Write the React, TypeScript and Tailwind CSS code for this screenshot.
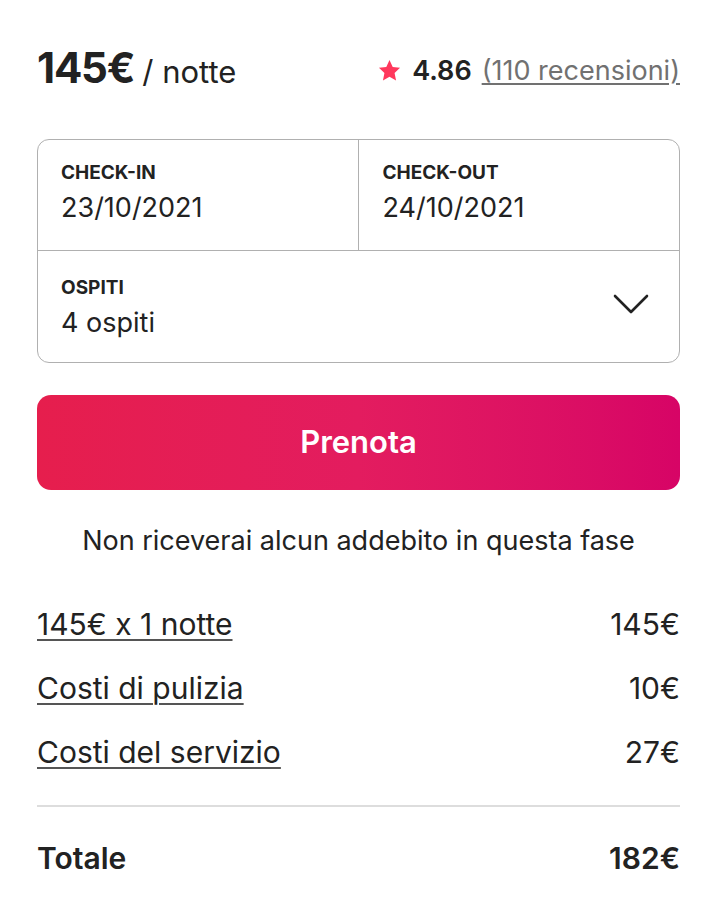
const font = { fontFamily: 'Inter, "Noto Sans", sans-serif' };

function Star() {
  return (
    <svg viewBox="0 0 32 32" className="h-[25px] w-[25px]" fill="#ff385c">
      <path d="M16 2.5l4.1 8.9 9.4 1.1-7 6.6 1.9 9.6L16 23.9l-8.4 4.8 1.9-9.6-7-6.6 9.4-1.1z" />
    </svg>
  );
}

function Chevron() {
  return (
    <svg viewBox="0 0 36 20" className="h-[20px] w-[36px]" fill="none" stroke="#222222" strokeWidth={2.6} strokeLinecap="round" strokeLinejoin="round">
      <path d="M2 2l16 16L34 2" />
    </svg>
  );
}

const lines = [
  { label: '145€ x 1 notte', value: '145€' },
  { label: 'Costi di pulizia', value: '10€' },
  { label: 'Costi del servizio', value: '27€' },
];

export default function App() {
  return (
    <div className="min-h-[922px] bg-white text-[#222222]" style={font}>
      <div className="ml-[37px] mr-[38px] pt-[40px]">
        {/* prezzo e valutazione */}
        <div className="flex h-[56px] items-baseline justify-between">
          <div className="flex items-baseline gap-[8px]">
            <span className="text-[42px] font-bold leading-[56px] tracking-[-1.2px]">145€</span>
            <span className="text-[31px] leading-[56px]">/ notte</span>
          </div>
          <div className="flex items-center gap-[10px] text-[27px] leading-[56px]">
            <Star />
            <span className="font-semibold">4.86</span>
            <span className="text-[#717171] underline decoration-2 underline-offset-[3px]">(110 recensioni)</span>
          </div>
        </div>

        {/* date e ospiti */}
        <div className="mt-[43px] rounded-[12px] border border-[#b0b0b0]">
          <div className="grid grid-cols-2 border-b border-[#b0b0b0]">
            <div className="h-[110px] border-r border-[#b0b0b0] pl-[23px] pt-[20px]">
              <div className="text-[19px] font-bold leading-[26px]">CHECK-IN</div>
              <div className="mt-[4px] text-[27px] leading-[36px]">23/10/2021</div>
            </div>
            <div className="h-[110px] pl-[24px] pt-[20px]">
              <div className="text-[19px] font-bold leading-[26px]">CHECK-OUT</div>
              <div className="mt-[4px] text-[27px] leading-[36px]">24/10/2021</div>
            </div>
          </div>
          <div className="flex h-[111px] items-center justify-between pl-[23px] pr-[30px]">
            <div className="pt-[2px]">
              <div className="text-[19px] font-bold leading-[26px]">OSPITI</div>
              <div className="mt-[4px] text-[27px] leading-[36px]">4 ospiti</div>
            </div>
            <div className="mb-[6px]">
              <Chevron />
            </div>
          </div>
        </div>

        <button className="mt-[32px] flex h-[95px] w-full items-center justify-center rounded-[14px] bg-gradient-to-r from-[#e61e4d] via-[#e31c5f] to-[#d70466] text-[31px] font-semibold text-white">
          Prenota
        </button>

        <p className="mt-[33px] text-center text-[27px] leading-[36px]">Non riceverai alcun addebito in questa fase</p>

        {/* dettaglio costi */}
        <div className="mt-[47px] flex flex-col gap-[28px]">
          {lines.map((l) => (
            <div key={l.label} className="flex justify-between text-[30px] leading-[36px]">
              <span className="underline decoration-2 underline-offset-[4px] decoration-[#555]">{l.label}</span>
              <span>{l.value}</span>
            </div>
          ))}
        </div>

        <div className="mt-[35px] border-t-2 border-[#dddddd]" />

        <div className="mt-[31px] flex justify-between text-[30px] font-semibold leading-[40px]">
          <span>Totale</span>
          <span>182€</span>
        </div>
      </div>
    </div>
  );
}
